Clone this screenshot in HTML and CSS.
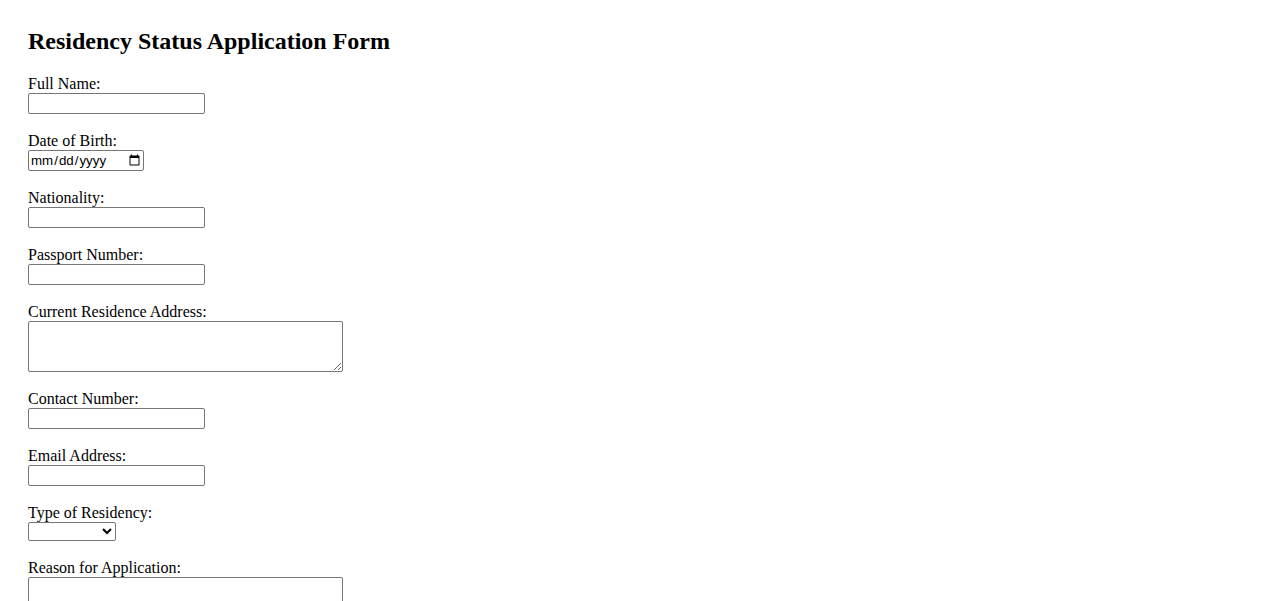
FILE: index.html
```html
<!DOCTYPE html>
<html lang="en">
<head>
<meta charset="utf-8">
<title>Residency Status Application Form</title>
<link rel="stylesheet" href="styles.css">
</head>
<body>
<div class="page">
<h2 class="title">Residency Status Application Form</h2>
<form class="form">
<label for="name">Full Name:</label><br>
<input type="text" id="name" class="field"><br><br>
<label for="dob">Date of Birth:</label><br>
<input type="date" id="dob" class="date"><br><br>
<label for="nat">Nationality:</label><br>
<input type="text" id="nat" class="field"><br><br>
<label for="pass">Passport Number:</label><br>
<input type="text" id="pass" class="field"><br><br>
<label for="addr">Current Residence Address:</label><br>
<textarea id="addr" class="area" rows="3" cols="40"></textarea><br><br>
<label for="phone">Contact Number:</label><br>
<input type="tel" id="phone" class="field"><br><br>
<label for="email">Email Address:</label><br>
<input type="email" id="email" class="field"><br><br>
<label for="type">Type of Residency:</label><br>
<select id="type" class="select"><option value=""></option><option>Temporary</option><option>Permanent</option></select><br><br>
<label for="reason">Reason for Application:</label><br>
<textarea id="reason" class="area" rows="3" cols="40"></textarea><br><br>
</form>
</div>
</body>
</html>
```
FILE: styles.css
```css
body {
  margin: 0;
  font-family: "Liberation Serif", "Times New Roman", serif;
  font-size: 16px;
  color: #000;
  background: #fff;
}
.page {
  padding: 28px;
}
.title {
  margin: 0 0 19.92px 0;
  font-size: 24px;
  font-weight: bold;
}
.field {
  box-sizing: border-box;
  width: 177px;
  height: 21px;
  border: 1px solid #767676;
  border-radius: 2px;
}
.date {
  box-sizing: border-box;
  width: 116px;
  height: 21px;
  border: 1px solid #767676;
  border-radius: 2px;
  font-family: "Liberation Sans", Arial, sans-serif;
  font-size: 13.33px;
}
.area {
  box-sizing: border-box;
  width: 315px;
  height: 51px;
  border: 1px solid #767676;
  border-radius: 2px;
  vertical-align: bottom;
}
.select {
  box-sizing: border-box;
  width: 88px;
  height: 19px;
  border: 1px solid #767676;
  border-radius: 2px;
  background: #fff;
}
```
